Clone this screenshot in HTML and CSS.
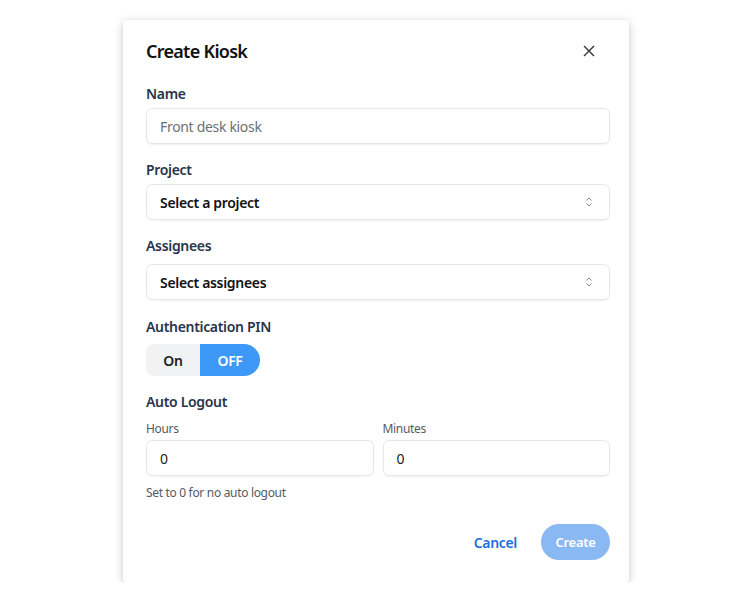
FILE: index.html
```html
<!DOCTYPE html>
<html lang="en">
<head>
    <meta charset="UTF-8">
    <title>Create Kiosk</title>
    <link rel="stylesheet" href="styles.css">
</head>
<body>
    <div class="dialog">
        <div class="header">
            <h2>Create Kiosk</h2>
            <button class="close">
                <svg width="12" height="12" viewBox="0 0 12 12"><path d="M1 1L11 11M11 1L1 11" stroke="#333" stroke-width="1.4" fill="none"/></svg>
            </button>
        </div>

        <div class="field">
            <label>Name</label>
            <div class="input placeholder">Front desk kiosk</div>
        </div>

        <div class="field">
            <label>Project</label>
            <div class="input select">
                <span>Select a project</span>
                <svg width="8" height="12" viewBox="0 0 8 12"><path d="M1.5 4.5L4 2L6.5 4.5M1.5 7.5L4 10L6.5 7.5" stroke="#888" stroke-width="1" fill="none"/></svg>
            </div>
        </div>

        <div class="field assignees">
            <label>Assignees</label>
            <div class="input select">
                <span>Select assignees</span>
                <svg width="8" height="12" viewBox="0 0 8 12"><path d="M1.5 4.5L4 2L6.5 4.5M1.5 7.5L4 10L6.5 7.5" stroke="#888" stroke-width="1" fill="none"/></svg>
            </div>
        </div>

        <div class="field pin">
            <label>Authentication PIN</label>
            <div class="toggle">
                <span class="on">On</span>
                <span class="off active">OFF</span>
            </div>
        </div>

        <div class="field">
            <label>Auto Logout</label>
            <div class="row">
                <div class="col">
                    <div class="small">Hours</div>
                    <div class="input">0</div>
                </div>
                <div class="col">
                    <div class="small">Minutes</div>
                    <div class="input">0</div>
                </div>
            </div>
            <div class="hint">Set to 0 for no auto logout</div>
        </div>

        <div class="footer">
            <button class="cancel">Cancel</button>
            <button class="create">Create</button>
        </div>
    </div>
</body>
</html>
```

FILE: styles.css
```css
body{
    margin: 0;
    background: #ffffff;
    font-family: "Noto Sans", "Open Sans", sans-serif;
    letter-spacing: -0.02em;
    color: #1a1a1a;
}

.dialog{
    width: 464px;
    margin: 20px 0 0 123px;
    padding: 18px 19px 22px 23px;
    background: #ffffff;
    border-radius: 4px;
    box-shadow: 0 2px 10px rgba(0,0,0,0.22);
}

.header{
    display: flex;
    justify-content: space-between;
    align-items: center;
    height: 26px;
    margin-bottom: 20px;
}

.header h2{
    margin: 0;
    font-size: 18px;
    font-weight: 600;
    letter-spacing: -0.04em;
    color: #111;
}

.close{
    border: none;
    background: none;
    padding: 0;
    margin-right: 15px;
    display: flex;
}

.field{
    margin-bottom: 16px;
}

.field label{
    display: block;
    font-size: 14px;
    font-weight: 600;
    color: #27344a;
    line-height: 20px;
    margin-bottom: 4px;
}

.assignees{
    margin-bottom: 17px;
}

.assignees label{
    margin-bottom: 8px;
}

.pin label{
    margin-bottom: 7px;
}

.input{
    box-sizing: border-box;
    height: 36px;
    padding: 0 13px;
    border: 1px solid #e6e8eb;
    border-radius: 6px;
    box-shadow: 0 1px 2px rgba(0,0,0,0.06);
    display: flex;
    align-items: center;
    font-size: 14px;
    color: #222;
}

.placeholder{
    color: #6b6f75;
}

.select{
    justify-content: space-between;
    font-weight: 600;
    color: #111;
    padding-right: 16px;
}

.toggle{
    display: inline-flex;
    height: 32px;
    font-size: 14px;
    font-weight: 600;
}

.toggle span{
    display: flex;
    align-items: center;
    justify-content: center;
}

.toggle .on{
    width: 54px;
    background: #f1f2f4;
    color: #222;
    border-radius: 8px 0 0 8px;
}

.toggle .off{
    width: 60px;
    background: #3d98f7;
    color: #fff;
    border-radius: 0 16px 16px 0;
}

.row{
    display: flex;
    gap: 9px;
    margin-top: 9px;
}

.col{
    flex: 1;
}

.small{
    font-size: 12px;
    color: #555a61;
    line-height: 16px;
    margin-bottom: 3px;
}

.hint{
    font-size: 12px;
    color: #555a61;
    margin-top: 9px;
    line-height: 16px;
}

.footer{
    display: flex;
    justify-content: flex-end;
    align-items: center;
    gap: 24px;
    margin-top: 23px;
}

.cancel{
    border: none;
    background: none;
    font-family: inherit;
    letter-spacing: inherit;
    font-size: 14px;
    font-weight: 600;
    color: #1b6fe0;
    padding: 0;
}

.create{
    border: none;
    font-family: inherit;
    letter-spacing: inherit;
    font-size: 13px;
    font-weight: 600;
    color: #fff;
    background: #8ab8f2;
    height: 36px;
    width: 69px;
    border-radius: 18px;
}
```
